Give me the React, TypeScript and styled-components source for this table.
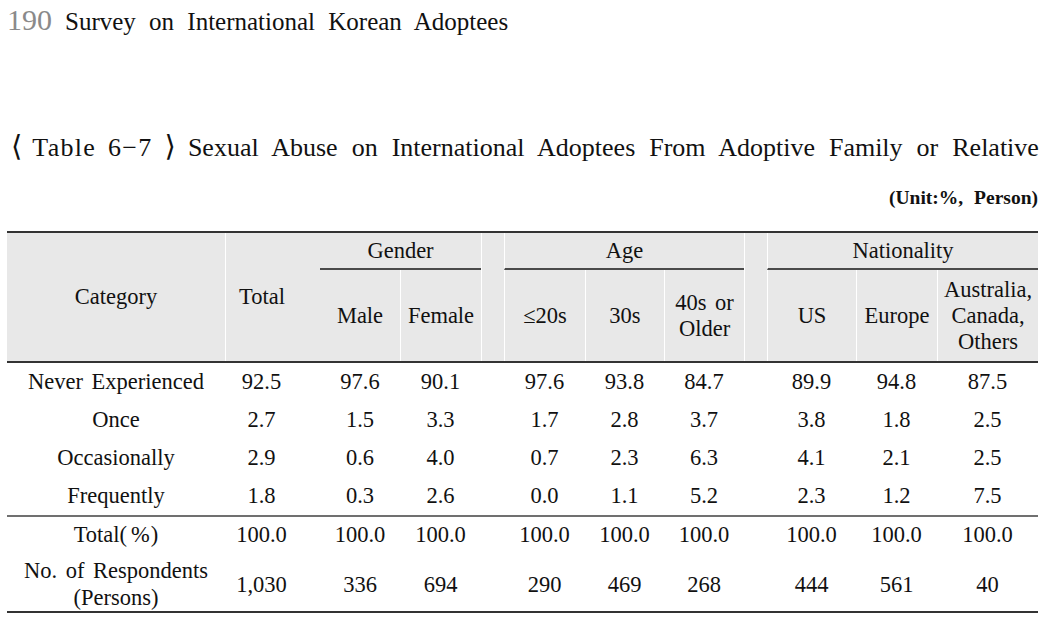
import styled, { createGlobalStyle } from 'styled-components';

const GlobalStyle = createGlobalStyle`
  html, body {
    margin: 0;
    padding: 0;
    background: #ffffff;
  }
  body {
    font-family: "Liberation Serif", "Times New Roman", serif;
    color: #111111;
  }
`;

type Row = { label: string; values: string[] };

const bodyRows: Row[] = [
  { label: 'Never Experienced', values: ['92.5', '97.6', '90.1', '97.6', '93.8', '84.7', '89.9', '94.8', '87.5'] },
  { label: 'Once', values: ['2.7', '1.5', '3.3', '1.7', '2.8', '3.7', '3.8', '1.8', '2.5'] },
  { label: 'Occasionally', values: ['2.9', '0.6', '4.0', '0.7', '2.3', '6.3', '4.1', '2.1', '2.5'] },
  { label: 'Frequently', values: ['1.8', '0.3', '2.6', '0.0', '1.1', '5.2', '2.3', '1.2', '7.5'] },
];

const totals = ['100.0', '100.0', '100.0', '100.0', '100.0', '100.0', '100.0', '100.0', '100.0'];
const respondents = ['1,030', '336', '694', '290', '469', '268', '444', '561', '40'];

// widths of the 12 columns, spacer columns included
const colWidths = [218, 95, 80, 81, 23, 81, 79, 80, 23, 89, 81, 101];

const App = () => {
  const renderCells = (values: string[]) => (
    <>
      <Cell $total>{values[0]}</Cell>
      <Cell>{values[1]}</Cell>
      <Cell>{values[2]}</Cell>
      <Cell />
      <Cell>{values[3]}</Cell>
      <Cell>{values[4]}</Cell>
      <Cell>{values[5]}</Cell>
      <Cell />
      <Cell>{values[6]}</Cell>
      <Cell>{values[7]}</Cell>
      <Cell>{values[8]}</Cell>
    </>
  );

  return (
    <Page>
      <GlobalStyle />
      <RunningHead>
        <PageNumber>190</PageNumber>
        <BookTitle>Survey on International Korean Adoptees</BookTitle>
      </RunningHead>

      <TableTitle>
        <Bracket $side="open">⟨</Bracket>
        <TableNo>Table 6−7</TableNo>
        <Bracket $side="close">⟩</Bracket>
        Sexual Abuse on International Adoptees From Adoptive Family or Relative
      </TableTitle>
      <Unit>(Unit:%, Person)</Unit>

      <DataTable>
        <colgroup>
          {colWidths.map((w, i) => (
            <col key={i} style={{ width: w }} />
          ))}
        </colgroup>
        <thead>
          <tr>
            <HeadCell rowSpan={2}>Category</HeadCell>
            <HeadCell rowSpan={2} $sep $total>Total</HeadCell>
            <GroupCell colSpan={2}>Gender</GroupCell>
            <HeadCell rowSpan={2} $sep />
            <GroupCell colSpan={3} $sep>Age</GroupCell>
            <HeadCell rowSpan={2} $sep />
            <GroupCell colSpan={3} $sep>Nationality</GroupCell>
          </tr>
          <tr>
            <SubCell>Male</SubCell>
            <SubCell $sep>Female</SubCell>
            <SubCell $sep>≤20s</SubCell>
            <SubCell $sep>30s</SubCell>
            <SubCell $sep>40s or<br />Older</SubCell>
            <SubCell $sep>US</SubCell>
            <SubCell $sep>Europe</SubCell>
            <SubCell $sep>Australia,<br />Canada,<br />Others</SubCell>
          </tr>
        </thead>
        <tbody>
          {bodyRows.map((row, i) => (
            <BodyRow key={row.label} $first={i === 0}>
              <Cell>{row.label}</Cell>
              {renderCells(row.values)}
            </BodyRow>
          ))}
          <SumRow>
            <Cell>Total(<Pct>%</Pct>)</Cell>
            {renderCells(totals)}
          </SumRow>
          <CountRow>
            <Cell>No. of Respondents<br />(Persons)</Cell>
            {renderCells(respondents)}
          </CountRow>
        </tbody>
      </DataTable>
    </Page>
  );
};

const Page = styled.div`
  width: 1031px;
  padding: 5px 0 0 7px;
`;

const RunningHead = styled.div`
  display: flex;
  align-items: baseline;
  gap: 13px;
  height: 30px;
  line-height: 30px;
`;

const PageNumber = styled.span`
  font-size: 30px;
  color: #8a8a8a;
`;

const BookTitle = styled.span`
  font-size: 25px;
  word-spacing: 7px;
  color: #111;
`;

const TableTitle = styled.div`
  margin-top: 96px;
  height: 34px;
  line-height: 34px;
  font-size: 26px;
  word-spacing: 7.5px;
  white-space: nowrap;
`;

const Bracket = styled.span<{ $side: 'open' | 'close' }>`
  font-family: "DejaVu Sans ExtraLight", "DejaVu Sans", sans-serif;
  font-size: 29px;
  font-weight: normal;
  line-height: 0;
  margin: ${(p) => (p.$side === 'open' ? '0 10px 0 4px' : '0 12px 0 12px')};
`;

const TableNo = styled.span`
  letter-spacing: 1.3px;
  word-spacing: 4px;
`;

const Unit = styled.div`
  margin-top: 21px;
  height: 24px;
  line-height: 24px;
  font-size: 19.5px;
  font-weight: bold;
  word-spacing: 6px;
  text-align: right;
`;

const DataTable = styled.table`
  margin-top: 21px;
  width: 1031px;
  table-layout: fixed;
  border-collapse: separate;
  border-spacing: 0;
  border-top: 2px solid #333;
  border-bottom: 2px solid #333;
  font-size: 22.5px;
  word-spacing: 3px;
`;

const HeadCell = styled.th<{ $sep?: boolean; $total?: boolean }>`
  box-sizing: border-box;
  padding: 0 ${(p) => (p.$total ? '22px' : '0')} 0 0;
  font-weight: normal;
  background: #e8e8e8;
  border-left: ${(p) => (p.$sep ? '1px solid #ffffff' : 'none')};
  text-align: center;
  vertical-align: middle;
  line-height: 26px;
`;

const GroupCell = styled(HeadCell)`
  height: 37px;
  border-bottom: 2px solid #4a4a4a;
`;

const SubCell = styled(HeadCell)`
  height: 91px;
`;

const Cell = styled.td<{ $total?: boolean }>`
  box-sizing: border-box;
  padding: 0 ${(p) => (p.$total ? '22px' : '0')} 0 0;
  text-align: center;
  vertical-align: middle;
  line-height: 26px;
  white-space: nowrap;
`;

const BodyRow = styled.tr<{ $first?: boolean }>`
  & > td {
    height: ${(p) => (p.$first ? '40px' : '38px')};
    border-top: ${(p) => (p.$first ? '2px solid #333' : 'none')};
  }
`;

const SumRow = styled.tr`
  & > td {
    height: 38px;
    border-top: 2px solid #707070;
  }
`;

const CountRow = styled.tr`
  & > td {
    height: 58px;
    padding-top: 4px;
    line-height: 27px;
  }
`;

const Pct = styled.span`
  margin: 0 1px 0 4px;
`;

export default App;
